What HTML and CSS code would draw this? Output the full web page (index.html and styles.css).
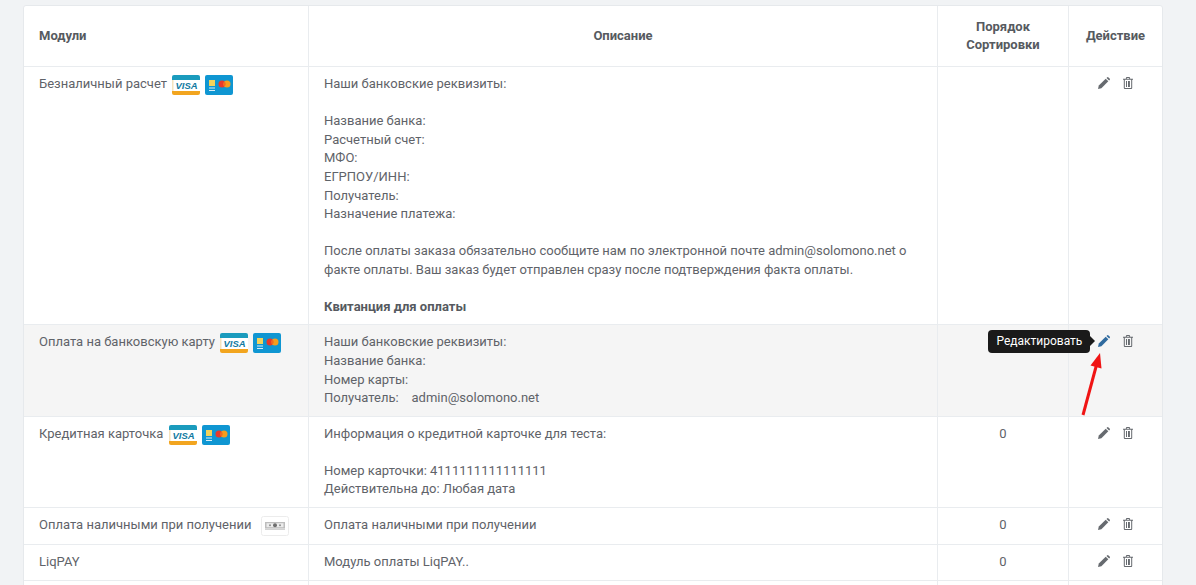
FILE: index.html
```html
<!DOCTYPE html>
<html lang="ru">
<head>
    <meta charset="UTF-8">
    <meta name="viewport" content="width=device-width, initial-scale=1.0">
    <title>Модули оплаты</title>
    <link rel="stylesheet" href="styles.css">
</head>
<body>

<svg class="sprite" width="0" height="0" aria-hidden="true">
    <symbol id="i-visa" viewBox="0 0 28 20">
        <rect width="28" height="20" rx="2" fill="#fff"/>
        <path d="M0 5V2a2 2 0 0 1 2-2h24a2 2 0 0 1 2 2v3z" fill="#1a9bbd"/>
        <path d="M0 16h28v2a2 2 0 0 1-2 2H2a2 2 0 0 1-2-2z" fill="#f2a51f"/>
        <path d="M0 5h1.500v11H0z" fill="#f6e3bd"/>
        <text class="visa-text" x="14.500" y="14" text-anchor="middle">VISA</text>
    </symbol>
    <symbol id="i-master" viewBox="0 0 28 20">
        <rect width="28" height="20" rx="2" fill="#0f96d2"/>
        <rect x="4" y="5" width="6" height="6" fill="#f3d35b"/>
        <rect x="4" y="12.500" width="6" height="1" fill="#d8eef8"/>
        <rect x="4" y="15" width="6" height="1" fill="#d8eef8"/>
        <circle cx="17" cy="9" r="3.500" fill="#e8392b"/>
        <circle cx="22" cy="9" r="3.500" fill="#f59d1e"/>
        <path d="M19.500 6.500a3.500 3.500 0 0 1 0 5 3.500 3.500 0 0 1 0-5z" fill="#f26a21"/>
    </symbol>
    <symbol id="i-cash" viewBox="0 0 28 20">
        <rect x=".5" y=".5" width="27" height="19" rx="2" fill="#fff" stroke="#ececec"/>
        <rect x="4" y="6" width="20" height="6.500" fill="#bdbdbd"/>
        <rect x="5.500" y="7.200" width="17" height="4" fill="#ececec"/>
        <circle cx="14" cy="9.200" r="2" fill="#6f6f6f"/>
        <circle cx="9" cy="9.200" r="1" fill="#8f8f8f"/>
        <circle cx="19" cy="9.200" r="1" fill="#8f8f8f"/>
        <rect x="4" y="12.500" width="20" height="1.500" fill="#d2d2d2"/>
    </symbol>
    <symbol id="i-pencil" viewBox="0 0 12 12">
        <path d="M0 12l.8-3.400L7.700 1.700l2.600 2.600-6.900 6.900z"/>
        <path d="M8.500.9l.5-.5a1.100 1.100 0 0 1 1.500 0l1.100 1.100a1.100 1.100 0 0 1 0 1.500l-.5.5z"/>
    </symbol>
    <symbol id="i-trash" viewBox="0 0 10 12">
        <path d="M3.400 0h3.200l.7 1.700H10v1H9.200V11a1 1 0 0 1-1 1H1.800a1 1 0 0 1-1-1V2.700H0v-1h2.700zM4 1l-.3.700h2.600L6 1zM1.800 2.700V11h6.400V2.700zM3 4h1v6H3zm2 0h1v6H5zm1.100 0h.9v6h-.9z" fill-rule="evenodd"/>
    </symbol>
</svg>

<div class="card">
    <table class="modules">
        <colgroup>
            <col class="col-name">
            <col class="col-desc">
            <col class="col-sort">
            <col class="col-action">
        </colgroup>
        <thead>
            <tr>
                <th class="left">Модули</th>
                <th>Описание</th>
                <th>Порядок Сортировки</th>
                <th>Действие</th>
            </tr>
        </thead>
        <tbody>
            <tr>
                <td>Безналичный расчет <svg class="pay"><use href="#i-visa"/></svg> <svg class="pay"><use href="#i-master"/></svg></td>
                <td>
                    Наши банковские реквизиты:<br><br>
                    Название банка:<br>
                    Расчетный счет:<br>
                    МФО:<br>
                    ЕГРПОУ/ИНН:<br>
                    Получатель:<br>
                    Назначение платежа:<br><br>
                    После оплаты заказа обязательно сообщите нам по электронной почте admin@solomono.net о факте оплаты. Ваш заказ будет отправлен сразу после подтверждения факта оплаты.<br><br>
                    <b>Квитанция для оплаты</b>
                </td>
                <td class="center"></td>
                <td class="center actions">
                    <span class="act"><svg class="ico-pencil"><use href="#i-pencil"/></svg></span>
                    <span class="act"><svg class="ico-trash"><use href="#i-trash"/></svg></span>
                </td>
            </tr>
            <tr class="hovered">
                <td>Оплата на банковскую карту <svg class="pay"><use href="#i-visa"/></svg> <svg class="pay"><use href="#i-master"/></svg></td>
                <td>
                    Наши банковские реквизиты:<br>
                    Название банка:<br>
                    Номер карты:<br>
                    Получатель: &nbsp; &nbsp;admin@solomono.net
                </td>
                <td class="center"></td>
                <td class="center actions">
                    <span class="act act-active">
                        <span class="tooltip">Редактировать</span>
                        <svg class="ico-pencil"><use href="#i-pencil"/></svg>
                    </span>
                    <span class="act"><svg class="ico-trash"><use href="#i-trash"/></svg></span>
                </td>
            </tr>
            <tr>
                <td>Кредитная карточка <svg class="pay"><use href="#i-visa"/></svg> <svg class="pay"><use href="#i-master"/></svg></td>
                <td>
                    Информация о кредитной карточке для теста:<br><br>
                    Номер карточки: 4111111111111111<br>
                    Действительна до: Любая дата
                </td>
                <td class="center">0</td>
                <td class="center actions">
                    <span class="act"><svg class="ico-pencil"><use href="#i-pencil"/></svg></span>
                    <span class="act"><svg class="ico-trash"><use href="#i-trash"/></svg></span>
                </td>
            </tr>
            <tr>
                <td>Оплата наличными при получении <svg class="pay pay-cash"><use href="#i-cash"/></svg></td>
                <td>Оплата наличными при получении</td>
                <td class="center">0</td>
                <td class="center actions">
                    <span class="act"><svg class="ico-pencil"><use href="#i-pencil"/></svg></span>
                    <span class="act"><svg class="ico-trash"><use href="#i-trash"/></svg></span>
                </td>
            </tr>
            <tr>
                <td>LiqPAY</td>
                <td>Модуль оплаты LiqPAY..</td>
                <td class="center">0</td>
                <td class="center actions">
                    <span class="act"><svg class="ico-pencil"><use href="#i-pencil"/></svg></span>
                    <span class="act"><svg class="ico-trash"><use href="#i-trash"/></svg></span>
                </td>
            </tr>
            <tr>
                <td>&nbsp;</td>
                <td></td>
                <td></td>
                <td></td>
            </tr>
        </tbody>
    </table>

    <!-- red arrow over the table, points at the edit icon -->
    <svg class="arrow" width="30" height="70" viewBox="0 0 30 70">
        <path d="M8 64L21.500 14" stroke="#f01414" stroke-width="3" fill="none"/>
        <path d="M25 2l1.500 15.500-11-3z" fill="#f01414"/>
    </svg>
</div>

</body>
</html>
```

FILE: styles.css
```css
html, body {
    height: 100%;
    overflow: hidden;
}
body {
    margin: 0;
    padding: 5px 33px 0 23px;
    box-sizing: border-box;
    background-color: #f1f3f5;
    font-family: 'Roboto', 'Liberation Sans', sans-serif;
    font-size: 13px;
    line-height: 1.42857;
    color: #5f6369;
}
.sprite {
    position: absolute;
}
.card {
    position: relative;
    background: #ffffff;
    border: 1px solid #e6e9ec;
    border-radius: 3px;
}
.modules {
    width: 100%;
    table-layout: fixed;
    border-collapse: separate;
    border-spacing: 0;
}
.col-name { width: 285px; }
.col-desc { width: 629px; }
.col-sort { width: 131px; }
.col-action { width: 93px; }

.modules th,
.modules td {
    border-right: 1px solid #e9ecef;
    border-bottom: 1px solid #e9ecef;
    vertical-align: top;
}
.modules th:last-child,
.modules td:last-child {
    border-right: none;
}
.modules th {
    padding: 11.5px 15px;
    vertical-align: middle;
    text-align: center;
    font-weight: 700;
    color: #565a60;
}
.modules th.left {
    text-align: left;
}
.modules td {
    padding: 8px 15px;
}
.modules td.center {
    text-align: center;
}
.modules b {
    color: #565a60;
}
.hovered td {
    background-color: #f5f5f5;
}
.pay {
    width: 28px;
    height: 20px;
    vertical-align: top;
    margin-left: 2px;
}
.pay-cash {
    margin-left: 6px;
}
.visa-text {
    font-family: 'Liberation Sans', sans-serif;
    font-size: 9.500px;
    font-weight: 700;
    font-style: italic;
    fill: #10799f;
}
.actions {
    white-space: nowrap;
}
.modules td.actions {
    padding-left: 0;
    padding-right: 0;
}
.act {
    position: relative;
    display: inline-block;
    height: 18px;
    vertical-align: top;
    color: #666a6f;
    fill: currentColor;
}
.act + .act {
    margin-left: 9px;
}
.ico-pencil {
    width: 12px;
    height: 12px;
    margin-top: 2px;
    display: block;
    fill: inherit;
}
.ico-trash {
    width: 10px;
    height: 12px;
    margin-top: 2px;
    display: block;
    fill: inherit;
}
.act-active {
    color: #2f6a9e;
}
.tooltip {
    position: absolute;
    right: 100%;
    top: -3px;
    margin-right: 8px;
    padding: 2px 8px;
    height: 23px;
    box-sizing: border-box;
    background-color: #1a1a1a;
    border-radius: 4px;
    color: #ffffff;
    font-size: 12px;
    line-height: 19px;
    white-space: nowrap;
}
.tooltip::after {
    content: '';
    position: absolute;
    left: 100%;
    top: 6px;
    border: 5px solid transparent;
    border-left-color: #1a1a1a;
    border-right-width: 0;
}
.arrow {
    position: absolute;
    left: 1051px;
    top: 345px;
}
```
